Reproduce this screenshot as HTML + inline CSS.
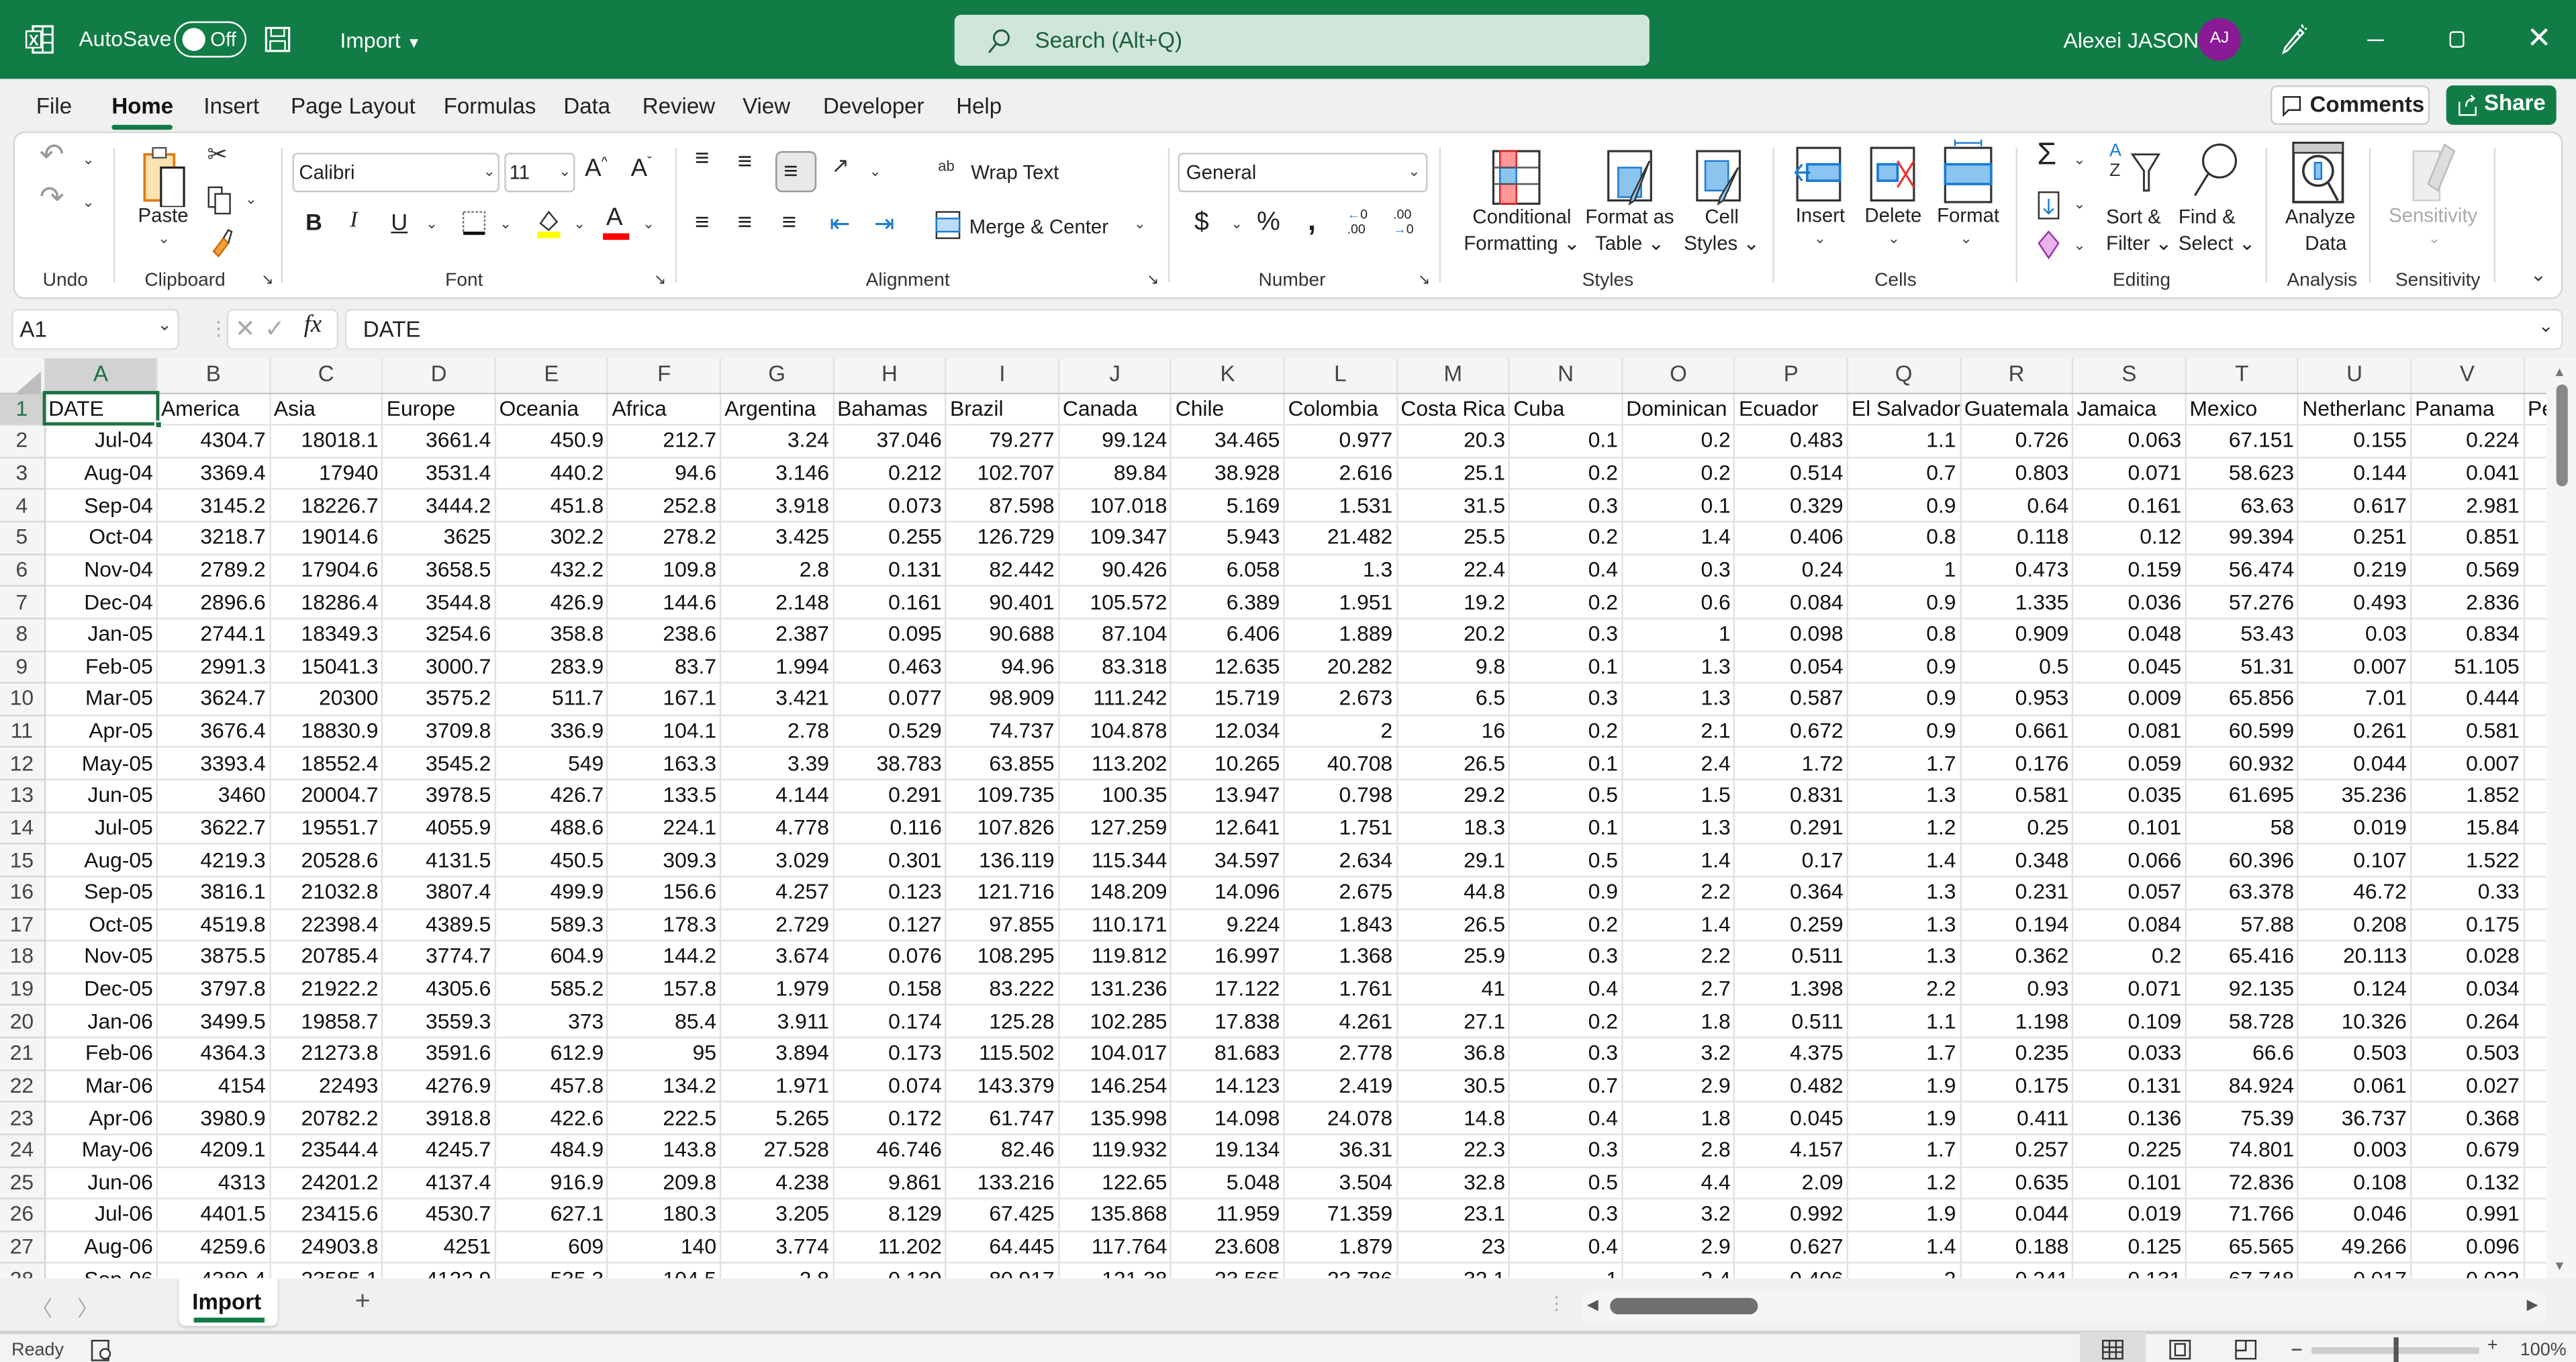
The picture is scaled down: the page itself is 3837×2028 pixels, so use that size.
<!DOCTYPE html>
<html><head><meta charset="utf-8">
<style>
*{box-sizing:border-box;margin:0;padding:0}
html,body{width:3837px;height:2028px;overflow:hidden;background:#f0f0f0}
#w{position:absolute;left:0;top:0;width:1568px;height:829px;transform:scale(2.44707,2.44632);transform-origin:0 0;font-family:"Liberation Sans",sans-serif;color:#222;background:#f0f0f0;overflow:hidden}
.a{position:absolute}
.t{position:absolute;white-space:nowrap}
#title{left:0;top:0;width:1568px;height:48px;background:#117c45;color:#fff;font-size:13px}
#search{left:581px;top:9px;width:423px;height:31px;background:#d0e6da;border-radius:4px;color:#1b5e3a;font-size:13.5px}
.tab{font-size:13.5px;color:#222;top:57px}
.grp{font-size:11.5px;color:#333;top:165px}
.rb{font-size:12px;color:#222}
.sep{position:absolute;top:90px;width:1px;height:82px;background:#dcdcdc}
.dd{font-size:9px;color:#444}
table{border-collapse:collapse;table-layout:fixed;font-size:13px}
td{height:19.64px;border-right:1px solid #e1e1e1;border-bottom:1px solid #e1e1e1;padding:0 2px;text-align:right;overflow:hidden;white-space:nowrap;line-height:18px;color:#111}
td.h{background:#f5f5f5;color:#444;text-align:center;border-color:#d5d5d5}
tr.hd td{background:#f5f5f5;text-align:center;color:#444;height:21px;border-bottom:1px solid #c8c8c8;font-size:13.5px}
tr.r1 td{text-align:left;padding-left:2px}
</style></head><body><div id="w">

<div id="title" class="a">
  <svg class="a" style="left:15px;top:15px" width="18" height="18" viewBox="0 0 18 18"><rect x="5" y="1" width="12" height="16" fill="none" stroke="#fff" stroke-width="1.3"/><line x1="11" y1="1" x2="11" y2="17" stroke="#fff"/><line x1="5" y1="6" x2="17" y2="6" stroke="#fff"/><line x1="5" y1="11" x2="17" y2="11" stroke="#fff"/><rect x="1" y="4" width="9" height="10" fill="#117c45" stroke="#fff"/><text x="2.5" y="12.5" font-size="9" fill="#fff" font-family="Liberation Sans" font-weight="bold">X</text></svg>
  <div class="t" style="left:48px;top:16px">AutoSave</div>
  <div class="a" style="left:106px;top:13px;width:44px;height:22px;border:1.5px solid #fff;border-radius:11px"></div>
  <div class="a" style="left:111px;top:17px;width:14px;height:14px;border-radius:7px;background:#fff"></div>
  <div class="t" style="left:128px;top:17px;font-size:12px">Off</div>
  <svg class="a" style="left:160px;top:15px" width="18" height="18" viewBox="0 0 18 18"><rect x="2" y="2" width="14" height="14" fill="none" stroke="#fff" stroke-width="1.3"/><rect x="5" y="2" width="8" height="5" fill="none" stroke="#fff"/><rect x="4.5" y="10" width="9" height="6" fill="none" stroke="#fff"/></svg>
  <div class="t" style="left:207px;top:17px">Import <span style="font-size:9px">▼</span></div>
  <div id="search" class="a">
    <svg class="a" style="left:20px;top:8px" width="14" height="16" viewBox="0 0 14 16"><circle cx="8.5" cy="6" r="4.5" fill="none" stroke="#1b5e3a" stroke-width="1.2"/><line x1="5.5" y1="9.5" x2="1" y2="15" stroke="#1b5e3a" stroke-width="1.2"/></svg>
    <div class="t" style="left:49px;top:8px">Search (Alt+Q)</div>
  </div>
  <div class="t" style="left:1256px;top:17px">Alexei JASON</div>
  <div class="a" style="left:1338px;top:11px;width:26px;height:26px;border-radius:13px;background:#8b1a96;color:#fff;font-size:10px;text-align:center;line-height:26px">AJ</div>
  <svg class="a" style="left:1388px;top:14px" width="18" height="20" viewBox="0 0 18 20"><path d="M4 17 L2 18 L3 15 L12 4 L14 6 Z M10 6 L12 8 M13 1 L14 3 M16 3 L15 4" fill="none" stroke="#fff" stroke-width="1.2"/></svg>
  <div class="a" style="left:1441px;top:24px;width:10px;height:1.2px;background:#fff"></div>
  <div class="a" style="left:1491px;top:19px;width:9px;height:10px;border:1.2px solid #fff;border-radius:2px"></div>
  <div class="t" style="left:1538px;top:13px;font-size:18px;font-weight:300">✕</div>
</div>

<div class="t tab" style="left:22px">File</div>
<div class="t tab" style="left:68px;color:#111;font-weight:600">Home</div>
<div class="a" style="left:68px;top:76px;width:37px;height:3px;border-radius:2px;background:#117c45"></div>
<div class="t tab" style="left:124px">Insert</div>
<div class="t tab" style="left:177px">Page Layout</div>
<div class="t tab" style="left:270px">Formulas</div>
<div class="t tab" style="left:343px">Data</div>
<div class="t tab" style="left:391px">Review</div>
<div class="t tab" style="left:452px">View</div>
<div class="t tab" style="left:501px">Developer</div>
<div class="t tab" style="left:582px">Help</div>
<div class="a" style="left:1382px;top:52px;width:97px;height:24px;background:#fff;border:1px solid #ccc;border-radius:4px;font-size:13.5px;font-weight:600">
  <svg class="a" style="left:6px;top:5px" width="12" height="14" viewBox="0 0 12 14"><path d="M1 1 H11 V9 H4 L1 12 Z" fill="none" stroke="#222"/></svg>
  <div class="t" style="left:23px;top:3px">Comments</div></div>
<div class="a" style="left:1489px;top:52px;width:67px;height:24px;background:#117c45;border-radius:4px;color:#fff;font-size:13.5px;font-weight:600">
  <svg class="a" style="left:7px;top:4px" width="12" height="15" viewBox="0 0 12 15"><path d="M1 6 V14 H11 V9 M5 9 C5 5 8 4 10 4 M8 2 L10 4 L8 6" fill="none" stroke="#fff"/></svg>
  <div class="t" style="left:23px;top:3px">Share</div></div>

<div class="a" style="left:8px;top:80px;width:1552px;height:102px;background:#fff;border:1px solid #d6d6d6;border-radius:7px"></div>
<div class="sep" style="left:69px"></div><div class="sep" style="left:171px"></div><div class="sep" style="left:411px"></div><div class="sep" style="left:711px"></div><div class="sep" style="left:876px"></div><div class="sep" style="left:1079px"></div><div class="sep" style="left:1227px"></div><div class="sep" style="left:1379px"></div><div class="sep" style="left:1442px"></div><div class="sep" style="left:1518px"></div>
<div class="t grp" style="left:26px">Undo</div>
<div class="t grp" style="left:88px">Clipboard</div><div class="t grp" style="left:159px;font-size:9px">↘</div>
<div class="t grp" style="left:271px">Font</div><div class="t grp" style="left:398px;font-size:9px">↘</div>
<div class="t grp" style="left:527px">Alignment</div><div class="t grp" style="left:698px;font-size:9px">↘</div>
<div class="t grp" style="left:766px">Number</div><div class="t grp" style="left:863px;font-size:9px">↘</div>
<div class="t grp" style="left:963px">Styles</div>
<div class="t grp" style="left:1141px">Cells</div>
<div class="t grp" style="left:1286px">Editing</div>
<div class="t grp" style="left:1392px">Analysis</div>
<div class="t grp" style="left:1458px">Sensitivity</div>
<div class="t" style="left:1540px;top:160px;font-size:12px;color:#444">⌄</div>

<div class="t" style="left:24px;top:84px;font-size:18px;color:#999">↶</div><div class="t dd" style="left:50px;top:92px">⌄</div>
<div class="t" style="left:24px;top:110px;font-size:18px;color:#999">↷</div><div class="t dd" style="left:50px;top:118px">⌄</div>
<svg class="a" style="left:86px;top:88px" width="32" height="38" viewBox="0 0 32 38"><rect x="2" y="6" width="18" height="28" fill="#fde3b0" stroke="#e07b10" stroke-width="1.5"/><rect x="7" y="2" width="8" height="6" fill="#fff" stroke="#555"/><rect x="12" y="14" width="14" height="24" fill="#fff" stroke="#222" stroke-width="1.3"/></svg>
<div class="t rb" style="left:84px;top:124px">Paste</div><div class="t dd" style="left:96px;top:140px">⌄</div>
<div class="t" style="left:126px;top:85px;font-size:15px;color:#333">✂</div>
<svg class="a" style="left:126px;top:113px" width="16" height="18" viewBox="0 0 16 18"><rect x="1" y="1" width="8" height="12" fill="none" stroke="#333"/><rect x="5" y="5" width="9" height="12" fill="#fff" stroke="#333"/></svg><div class="t dd" style="left:149px;top:116px">⌄</div>
<svg class="a" style="left:127px;top:139px" width="16" height="18" viewBox="0 0 16 18"><path d="M3 14 L9 6 L12 9 L6 17 Z" fill="#f0a040" stroke="#d06a00"/><path d="M9 6 L12 1 L14 2 L12 9" fill="none" stroke="#333"/></svg>
<div class="a" style="left:178px;top:93px;width:126px;height:24px;border:1px solid #c8c8c8;border-radius:3px"></div>
<div class="t rb" style="left:182px;top:98px">Calibri</div><div class="t dd" style="left:294px;top:99px">⌄</div>
<div class="a" style="left:307px;top:93px;width:43px;height:24px;border:1px solid #c8c8c8;border-radius:3px"></div>
<div class="t rb" style="left:310px;top:98px">11</div><div class="t dd" style="left:340px;top:99px">⌄</div>
<div class="t" style="left:356px;top:94px;font-size:15px">A<sup style="font-size:8px">^</sup></div>
<div class="t" style="left:384px;top:94px;font-size:15px">A<sup style="font-size:8px">ˇ</sup></div>
<div class="t" style="left:186px;top:127px;font-size:14px;font-weight:bold">B</div>
<div class="t" style="left:213px;top:127px;font-size:14px;font-style:italic;font-family:'Liberation Serif',serif">I</div>
<div class="t" style="left:238px;top:127px;font-size:14px;text-decoration:underline">U</div><div class="t dd" style="left:259px;top:131px">⌄</div>
<svg class="a" style="left:281px;top:128px" width="15" height="15" viewBox="0 0 15 15"><rect x="1" y="1" width="13" height="13" fill="none" stroke="#777" stroke-dasharray="1.5 1"/><line x1="1" y1="14" x2="14" y2="14" stroke="#111" stroke-width="2"/></svg><div class="t dd" style="left:304px;top:131px">⌄</div>
<svg class="a" style="left:326px;top:126px" width="16" height="20" viewBox="0 0 16 20"><path d="M3 10 L8 3 L13 9 L8 14 Z" fill="none" stroke="#333"/><rect x="1" y="15" width="14" height="4" fill="#ffff00"/></svg><div class="t dd" style="left:349px;top:131px">⌄</div>
<div class="t" style="left:369px;top:124px;font-size:15px">A</div><div class="a" style="left:367px;top:142px;width:16px;height:4px;background:#f00"></div><div class="t dd" style="left:391px;top:131px">⌄</div>
<div class="t" style="left:423px;top:91px;font-size:15px;line-height:12px">≡</div>
<div class="t" style="left:449px;top:93px;font-size:15px;line-height:12px">≡</div>
<div class="a" style="left:472px;top:92px;width:25px;height:25px;background:#e8e8e8;border:1px solid #999;border-radius:4px"></div>
<div class="t" style="left:477px;top:99px;font-size:15px;line-height:12px">≡</div>
<div class="t" style="left:506px;top:93px;font-size:13px;color:#333">↗</div><div class="t dd" style="left:529px;top:99px">⌄</div>
<div class="t" style="left:423px;top:127px;font-size:15px">≡</div><div class="t" style="left:449px;top:127px;font-size:15px">≡</div><div class="t" style="left:476px;top:127px;font-size:15px">≡</div>
<div class="t" style="left:505px;top:127px;font-size:15px;color:#1a7ad4">⇤</div><div class="t" style="left:532px;top:127px;font-size:15px;color:#1a7ad4">⇥</div>
<div class="t" style="left:571px;top:96px;font-size:9px;color:#333">ab</div>
<div class="t rb" style="left:591px;top:98px">Wrap Text</div>
<svg class="a" style="left:569px;top:128px" width="16" height="18" viewBox="0 0 16 18"><rect x="1" y="1" width="14" height="16" fill="#fff" stroke="#333"/><rect x="1" y="5" width="14" height="8" fill="#bcdcf5" stroke="#1a7ad4"/></svg>
<div class="t rb" style="left:590px;top:131px">Merge &amp; Center</div><div class="t dd" style="left:690px;top:131px">⌄</div>
<div class="a" style="left:717px;top:93px;width:152px;height:24px;border:1px solid #c8c8c8;border-radius:3px"></div>
<div class="t rb" style="left:722px;top:98px">General</div><div class="t dd" style="left:857px;top:99px">⌄</div>
<div class="t" style="left:727px;top:127px;font-size:16px">$</div><div class="t dd" style="left:749px;top:131px">⌄</div>
<div class="t" style="left:765px;top:127px;font-size:16px">%</div>
<div class="t" style="left:796px;top:124px;font-size:18px;font-weight:bold">,</div>
<div class="t" style="left:820px;top:126px;font-size:8px;line-height:9px"><span style="color:#1a7ad4">←</span>0<br>.00</div>
<div class="t" style="left:848px;top:126px;font-size:8px;line-height:9px">.00<br><span style="color:#1a7ad4">→</span>0</div>
<svg class="a" style="left:907px;top:90px" width="32" height="36" viewBox="0 0 32 36"><rect x="2" y="2" width="28" height="32" fill="#fff" stroke="#333" stroke-width="1.3"/><rect x="6" y="2" width="10" height="10" fill="#f99" stroke="#d22"/><rect x="6" y="12" width="10" height="10" fill="#8cc4f0" stroke="#1a7ad4"/><rect x="6" y="22" width="10" height="12" fill="#f99" stroke="#d22"/><line x1="2" y1="12" x2="30" y2="12" stroke="#555"/><line x1="2" y1="22" x2="30" y2="22" stroke="#555"/></svg>
<div class="t rb" style="left:891px;top:124px;text-align:center;line-height:16px">Conditional<br>Formatting ⌄</div>
<svg class="a" style="left:977px;top:90px" width="32" height="36" viewBox="0 0 32 36"><rect x="2" y="2" width="26" height="30" fill="#fff" stroke="#333" stroke-width="1.3"/><rect x="8" y="12" width="14" height="18" fill="#8cc4f0" stroke="#1a7ad4"/><path d="M27 8 L18 32 L15 34 L16 30 Z" fill="#8cc4f0" stroke="#333"/></svg>
<div class="t rb" style="left:965px;top:124px;text-align:center;line-height:16px">Format as<br>Table ⌄</div>
<svg class="a" style="left:1031px;top:90px" width="32" height="36" viewBox="0 0 32 36"><rect x="2" y="2" width="26" height="30" fill="#fff" stroke="#333" stroke-width="1.3"/><rect x="7" y="8" width="14" height="18" fill="#8cc4f0" stroke="#1a7ad4"/><path d="M27 12 L18 32 L15 34 L16 30 Z" fill="#8cc4f0" stroke="#333"/></svg>
<div class="t rb" style="left:1025px;top:124px;text-align:center;line-height:16px">Cell<br>Styles ⌄</div>
<svg class="a" style="left:1092px;top:88px" width="32" height="36" viewBox="0 0 32 36"><rect x="2" y="2" width="26" height="32" fill="#fff" stroke="#333" stroke-width="1.3"/><rect x="8" y="12" width="20" height="10" fill="#8cc4f0" stroke="#1a7ad4" stroke-width="1.5"/><path d="M10 17 H1 M5 12 L1 17 L5 22" fill="none" stroke="#1a7ad4" stroke-width="1.3"/></svg>
<div class="t rb" style="left:1093px;top:124px">Insert</div><div class="t dd" style="left:1104px;top:140px">⌄</div>
<svg class="a" style="left:1137px;top:88px" width="32" height="36" viewBox="0 0 32 36"><rect x="2" y="2" width="26" height="32" fill="#fff" stroke="#333" stroke-width="1.3"/><rect x="6" y="12" width="12" height="10" fill="#8cc4f0" stroke="#1a7ad4" stroke-width="1.5"/><path d="M18 10 L28 26 M28 10 L18 26" stroke="#e33" stroke-width="1.3"/></svg>
<div class="t rb" style="left:1135px;top:124px">Delete</div><div class="t dd" style="left:1149px;top:140px">⌄</div>
<svg class="a" style="left:1182px;top:85px" width="32" height="40" viewBox="0 0 32 40"><rect x="2" y="5" width="28" height="33" fill="#fff" stroke="#333" stroke-width="1.3"/><rect x="2" y="15" width="28" height="12" fill="#8cc4f0" stroke="#1a7ad4" stroke-width="1.5"/><path d="M8 2 H24 M8 0 V4 M24 0 V4" stroke="#1a7ad4"/></svg>
<div class="t rb" style="left:1179px;top:124px">Format</div><div class="t dd" style="left:1193px;top:140px">⌄</div>
<div class="t" style="left:1240px;top:84px;font-size:19px">Σ</div><div class="t dd" style="left:1262px;top:92px">⌄</div>
<svg class="a" style="left:1240px;top:116px" width="14" height="18" viewBox="0 0 14 18"><rect x="1" y="1" width="12" height="16" fill="#fff" stroke="#333"/><path d="M7 5 V14 M4 11 L7 14 L10 11" fill="none" stroke="#1a7ad4"/></svg><div class="t dd" style="left:1262px;top:119px">⌄</div>
<svg class="a" style="left:1239px;top:140px" width="16" height="18" viewBox="0 0 16 18"><path d="M8 1 L14 8 L8 17 L2 8 Z" fill="#e6b3ea" stroke="#9b2fae"/></svg><div class="t dd" style="left:1262px;top:144px">⌄</div>
<div class="t" style="left:1284px;top:86px;font-size:11px;line-height:12px;color:#1a7ad4">A<br><span style="color:#333">Z</span></div>
<svg class="a" style="left:1296px;top:92px" width="20" height="26" viewBox="0 0 20 26"><path d="M2 2 H18 L12 12 V24 H9 V12 Z" fill="none" stroke="#333" stroke-width="1.2"/></svg>
<div class="t rb" style="left:1282px;top:124px;line-height:16px">Sort &amp;<br>Filter ⌄</div>
<svg class="a" style="left:1333px;top:86px" width="30" height="34" viewBox="0 0 30 34"><circle cx="18" cy="12" r="10" fill="none" stroke="#333" stroke-width="1.3"/><line x1="11" y1="20" x2="3" y2="33" stroke="#333" stroke-width="1.3"/></svg>
<div class="t rb" style="left:1326px;top:124px;line-height:16px">Find &amp;<br>Select ⌄</div>
<svg class="a" style="left:1395px;top:86px" width="32" height="38" viewBox="0 0 32 38"><rect x="1" y="1" width="30" height="36" fill="#fff" stroke="#333" stroke-width="1.5"/><rect x="1" y="1" width="30" height="6" fill="#ccc" stroke="#333"/><circle cx="16" cy="18" r="9" fill="none" stroke="#333" stroke-width="1.5"/><rect x="14" y="13" width="4" height="10" fill="#8cc4f0" stroke="#1a7ad4"/><line x1="22" y1="25" x2="28" y2="36" stroke="#333" stroke-width="1.5"/></svg>
<div class="t rb" style="left:1391px;top:124px;text-align:center;line-height:16px">Analyze<br>&nbsp;&nbsp;Data</div>
<svg class="a" style="left:1466px;top:86px" width="32" height="40" viewBox="0 0 32 40"><rect x="3" y="6" width="16" height="30" fill="#eee" stroke="#ccc"/><path d="M22 2 L28 6 L18 30 L12 26 Z" fill="#ddd" stroke="#bbb"/></svg>
<div class="t rb" style="left:1454px;top:124px;color:#aaa">Sensitivity</div><div class="t dd" style="left:1478px;top:140px;color:#aaa">⌄</div>

<div class="a" style="left:7px;top:188px;width:102px;height:25px;background:#fff;border:1px solid #ddd;border-radius:4px"></div>
<div class="t" style="left:12px;top:193px;font-size:13.5px">A1</div><div class="t" style="left:96px;top:193px;font-size:10px;color:#333">⌄</div>
<div class="t" style="left:127px;top:193px;color:#aaa;font-size:12px">⋮</div>
<div class="a" style="left:138px;top:188px;width:68px;height:25px;background:#fff;border:1px solid #ddd;border-radius:4px"></div>
<div class="t" style="left:143px;top:191px;font-size:15px;color:#aaa">✕</div>
<div class="t" style="left:161px;top:191px;font-size:15px;color:#aaa">✓</div>
<div class="t" style="left:185px;top:190px;font-size:15px;font-style:italic;font-family:'Liberation Serif',serif">fx</div>
<div class="a" style="left:210px;top:188px;width:1350px;height:25px;background:#fff;border:1px solid #ddd;border-radius:4px"></div>
<div class="t" style="left:221px;top:193px;font-size:13.5px">DATE</div>
<div class="t" style="left:1545px;top:192px;font-size:11px;color:#333">⌄</div>

<div class="a" style="left:0;top:218px;width:1550px;height:560px;background:#fff;overflow:hidden">
<table id="g" style="width:1605px"></table>
<svg class="a" style="left:9px;top:8px" width="16" height="14"><path d="M16 0 V14 H0 Z" fill="#bdbdbd"/></svg>
<div class="a" style="left:26px;top:20px;width:71px;height:21px;border:2px solid #1e7145"></div>
<div class="a" style="left:94px;top:38px;width:5px;height:5px;background:#1e7145;border:1px solid #fff"></div>
</div>
<div class="a" style="left:1550px;top:218px;width:18px;height:560px;background:#f5f5f5"></div>
<div class="t" style="left:1554px;top:222px;font-size:8px;color:#777">▲</div>
<div class="a" style="left:1556px;top:234px;width:7px;height:62px;background:#888;border-radius:4px"></div>
<div class="t" style="left:1554px;top:766px;font-size:8px;color:#777">▼</div>

<div class="t" style="left:19px;top:786px;font-size:13px;color:#aaa">〈</div>
<div class="t" style="left:47px;top:786px;font-size:13px;color:#aaa">〉</div>
<div class="a" style="left:109px;top:778px;width:60px;height:29px;background:#fff;border-radius:0 0 4px 4px;box-shadow:0 1px 2px #ccc"></div>
<div class="t" style="left:117px;top:785px;font-size:13.5px;font-weight:600;color:#111">Import</div>
<div class="a" style="left:118px;top:802px;width:43px;height:3px;background:#117c45"></div>
<div class="t" style="left:216px;top:784px;font-size:16px;color:#555">+</div>
<div class="t" style="left:942px;top:787px;font-size:11px;color:#aaa">⋮</div>
<div class="a" style="left:963px;top:786px;width:587px;height:20px;background:#f5f5f5;border-radius:4px"></div>
<div class="t" style="left:966px;top:789px;font-size:9px;color:#555">◀</div>
<div class="a" style="left:980px;top:790px;width:90px;height:10px;background:#707070;border-radius:5px"></div>
<div class="t" style="left:1538px;top:789px;font-size:9px;color:#555">▶</div>

<div class="a" style="left:0;top:810px;width:1568px;height:19px;background:#f3f3f3;border-top:2px solid #cfcfcf"></div>
<div class="t" style="left:7px;top:816px;font-size:11px;color:#444">Ready</div>
<svg class="a" style="left:55px;top:815px" width="14" height="14"><rect x="1" y="1" width="10" height="12" fill="none" stroke="#333"/><circle cx="9" cy="9" r="3" fill="#fff" stroke="#333"/></svg>
<div class="a" style="left:1266px;top:811px;width:40px;height:18px;background:#dcdcdc"></div>
<svg class="a" style="left:1279px;top:815px" width="14" height="13"><rect x="1" y="1" width="12" height="11" fill="none" stroke="#333"/><path d="M1 5H13M1 8H13M5 1V12M9 1V12" stroke="#333"/></svg>
<svg class="a" style="left:1320px;top:815px" width="14" height="13"><rect x="1" y="1" width="12" height="11" fill="none" stroke="#333"/><rect x="4" y="3" width="6" height="7" fill="none" stroke="#333"/></svg>
<svg class="a" style="left:1360px;top:815px" width="14" height="13"><rect x="1" y="1" width="12" height="11" fill="none" stroke="#333"/><path d="M7 1V7H1" fill="none" stroke="#333"/></svg>
<div class="a" style="left:1395px;top:821px;width:6px;height:1px;background:#444"></div>
<div class="a" style="left:1407px;top:820px;width:102px;height:4px;background:#ccc"></div>
<div class="a" style="left:1457px;top:814px;width:3px;height:15px;background:#555"></div>
<div class="t" style="left:1514px;top:813px;font-size:11px;color:#444">+</div>
<div class="t" style="left:1534px;top:816px;font-size:11px;color:#444">100%</div>

<script>
var cols="A B C D E F G H I J K L M N O P Q R S T U V W".split(" ");
var data=[
"DATE,America,Asia,Europe,Oceania,Africa,Argentina,Bahamas,Brazil,Canada,Chile,Colombia,Costa Rica,Cuba,Dominican,Ecuador,El Salvador,Guatemala,Jamaica,Mexico,Netherlanc,Panama,Pe",
"Jul-04,4304.7,18018.1,3661.4,450.9,212.7,3.24,37.046,79.277,99.124,34.465,0.977,20.3,0.1,0.2,0.483,1.1,0.726,0.063,67.151,0.155,0.224,",
"Aug-04,3369.4,17940,3531.4,440.2,94.6,3.146,0.212,102.707,89.84,38.928,2.616,25.1,0.2,0.2,0.514,0.7,0.803,0.071,58.623,0.144,0.041,",
"Sep-04,3145.2,18226.7,3444.2,451.8,252.8,3.918,0.073,87.598,107.018,5.169,1.531,31.5,0.3,0.1,0.329,0.9,0.64,0.161,63.63,0.617,2.981,",
"Oct-04,3218.7,19014.6,3625,302.2,278.2,3.425,0.255,126.729,109.347,5.943,21.482,25.5,0.2,1.4,0.406,0.8,0.118,0.12,99.394,0.251,0.851,",
"Nov-04,2789.2,17904.6,3658.5,432.2,109.8,2.8,0.131,82.442,90.426,6.058,1.3,22.4,0.4,0.3,0.24,1,0.473,0.159,56.474,0.219,0.569,",
"Dec-04,2896.6,18286.4,3544.8,426.9,144.6,2.148,0.161,90.401,105.572,6.389,1.951,19.2,0.2,0.6,0.084,0.9,1.335,0.036,57.276,0.493,2.836,",
"Jan-05,2744.1,18349.3,3254.6,358.8,238.6,2.387,0.095,90.688,87.104,6.406,1.889,20.2,0.3,1,0.098,0.8,0.909,0.048,53.43,0.03,0.834,",
"Feb-05,2991.3,15041.3,3000.7,283.9,83.7,1.994,0.463,94.96,83.318,12.635,20.282,9.8,0.1,1.3,0.054,0.9,0.5,0.045,51.31,0.007,51.105,",
"Mar-05,3624.7,20300,3575.2,511.7,167.1,3.421,0.077,98.909,111.242,15.719,2.673,6.5,0.3,1.3,0.587,0.9,0.953,0.009,65.856,7.01,0.444,",
"Apr-05,3676.4,18830.9,3709.8,336.9,104.1,2.78,0.529,74.737,104.878,12.034,2,16,0.2,2.1,0.672,0.9,0.661,0.081,60.599,0.261,0.581,",
"May-05,3393.4,18552.4,3545.2,549,163.3,3.39,38.783,63.855,113.202,10.265,40.708,26.5,0.1,2.4,1.72,1.7,0.176,0.059,60.932,0.044,0.007,",
"Jun-05,3460,20004.7,3978.5,426.7,133.5,4.144,0.291,109.735,100.35,13.947,0.798,29.2,0.5,1.5,0.831,1.3,0.581,0.035,61.695,35.236,1.852,",
"Jul-05,3622.7,19551.7,4055.9,488.6,224.1,4.778,0.116,107.826,127.259,12.641,1.751,18.3,0.1,1.3,0.291,1.2,0.25,0.101,58,0.019,15.84,",
"Aug-05,4219.3,20528.6,4131.5,450.5,309.3,3.029,0.301,136.119,115.344,34.597,2.634,29.1,0.5,1.4,0.17,1.4,0.348,0.066,60.396,0.107,1.522,",
"Sep-05,3816.1,21032.8,3807.4,499.9,156.6,4.257,0.123,121.716,148.209,14.096,2.675,44.8,0.9,2.2,0.364,1.3,0.231,0.057,63.378,46.72,0.33,",
"Oct-05,4519.8,22398.4,4389.5,589.3,178.3,2.729,0.127,97.855,110.171,9.224,1.843,26.5,0.2,1.4,0.259,1.3,0.194,0.084,57.88,0.208,0.175,",
"Nov-05,3875.5,20785.4,3774.7,604.9,144.2,3.674,0.076,108.295,119.812,16.997,1.368,25.9,0.3,2.2,0.511,1.3,0.362,0.2,65.416,20.113,0.028,",
"Dec-05,3797.8,21922.2,4305.6,585.2,157.8,1.979,0.158,83.222,131.236,17.122,1.761,41,0.4,2.7,1.398,2.2,0.93,0.071,92.135,0.124,0.034,",
"Jan-06,3499.5,19858.7,3559.3,373,85.4,3.911,0.174,125.28,102.285,17.838,4.261,27.1,0.2,1.8,0.511,1.1,1.198,0.109,58.728,10.326,0.264,",
"Feb-06,4364.3,21273.8,3591.6,612.9,95,3.894,0.173,115.502,104.017,81.683,2.778,36.8,0.3,3.2,4.375,1.7,0.235,0.033,66.6,0.503,0.503,",
"Mar-06,4154,22493,4276.9,457.8,134.2,1.971,0.074,143.379,146.254,14.123,2.419,30.5,0.7,2.9,0.482,1.9,0.175,0.131,84.924,0.061,0.027,",
"Apr-06,3980.9,20782.2,3918.8,422.6,222.5,5.265,0.172,61.747,135.998,14.098,24.078,14.8,0.4,1.8,0.045,1.9,0.411,0.136,75.39,36.737,0.368,",
"May-06,4209.1,23544.4,4245.7,484.9,143.8,27.528,46.746,82.46,119.932,19.134,36.31,22.3,0.3,2.8,4.157,1.7,0.257,0.225,74.801,0.003,0.679,",
"Jun-06,4313,24201.2,4137.4,916.9,209.8,4.238,9.861,133.216,122.65,5.048,3.504,32.8,0.5,4.4,2.09,1.2,0.635,0.101,72.836,0.108,0.132,",
"Jul-06,4401.5,23415.6,4530.7,627.1,180.3,3.205,8.129,67.425,135.868,11.959,71.359,23.1,0.3,3.2,0.992,1.9,0.044,0.019,71.766,0.046,0.991,",
"Aug-06,4259.6,24903.8,4251,609,140,3.774,11.202,64.445,117.764,23.608,1.879,23,0.4,2.9,0.627,1.4,0.188,0.125,65.565,49.266,0.096,",
"Sep-06,4380.4,23585.1,4122.9,535.3,104.5,2.8,0.139,80.917,121.38,23.565,23.786,32.1,1,2.4,0.406,2,0.241,0.131,67.748,0.017,0.022,"];
var h='<colgroup><col style="width:27px">';for(var i=0;i<23;i++)h+='<col style="width:68.6px">';h+='</colgroup>';
h+='<tr class="hd"><td class="h" style="background:#f5f5f5"></td>';
cols.forEach(function(c,i){h+='<td'+(i==0?' style="background:#d2d2d2;color:#1e7145;border-bottom:2px solid #1e7145"':'')+'>'+c+'</td>';});
h+='</tr>';
data.forEach(function(r,i){var v=r.split(",");h+='<tr'+(i==0?' class="r1"':'')+'><td class="h"'+(i==0?' style="background:#d2d2d2;color:#1e7145;text-align:center"':'')+'>'+(i+1)+'</td>';
for(var j=0;j<23;j++)h+='<td>'+(v[j]||'')+'</td>';h+='</tr>';});
document.getElementById('g').innerHTML=h;
</script>
</div></body></html>
